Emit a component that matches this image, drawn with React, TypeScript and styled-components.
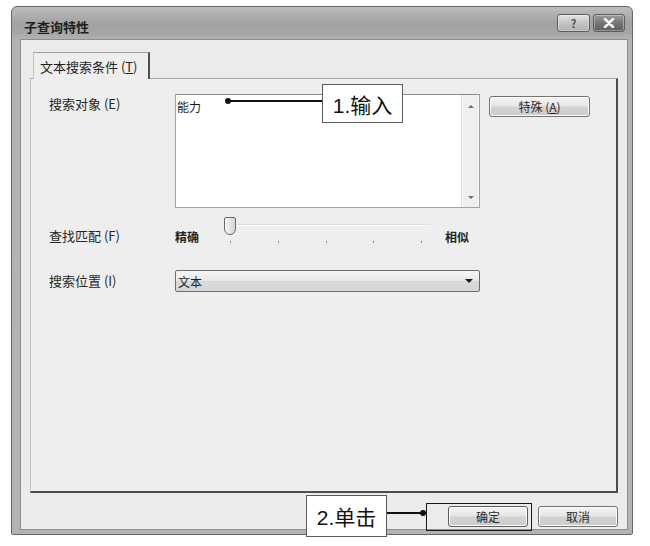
import styled, { createGlobalStyle } from "styled-components";

const GlobalStyle = createGlobalStyle`
  html, body {
    margin: 0;
    padding: 0;
    background: #ffffff;
  }
  body {
    font-family: "Noto Sans CJK SC", "Liberation Sans", sans-serif;
    color: #222;
  }
  * { box-sizing: border-box; }
`;

const Page = styled.div`
  position: relative;
  width: 650px;
  height: 546px;
  padding: 6px 0 0 11px;
  overflow: hidden;
`;

const Window = styled.div`
  width: 622px;
  height: 529px;
  display: flex;
  flex-direction: column;
  border: 1px solid #666666;
  border-radius: 6px 6px 2px 2px;
  background: linear-gradient(180deg, #bdbdbd 0px, #a2a2a2 16px, #a6a6a6 26px, #b4b4b4 34px, #b3b3b3 100%);
`;

const TitleBar = styled.div`
  height: 32px;
  display: flex;
  align-items: flex-start;
  justify-content: space-between;
  padding: 0 7px 0 12px;
`;

const Title = styled.span`
  font-size: 13px;
  line-height: 16px;
  font-weight: 700;
  color: #1e1e1e;
  margin-top: 12px;
`;

const CaptionButtons = styled.div`
  display: flex;
  gap: 3px;
  margin-top: 7px;
`;

const CaptionButton = styled.div<{ $dark?: boolean }>`
  width: ${({ $dark }) => ($dark ? "32px" : "33px")};
  height: 18px;
  display: flex;
  align-items: center;
  justify-content: center;
  font-size: 11px;
  font-weight: 700;
  color: #505050;
  border: 1px solid #5c5c5c;
  border-radius: 3px;
  background: ${({ $dark }) =>
    $dark
      ? "linear-gradient(180deg, #9c9c9c 0%, #767676 50%, #5e5e5e 100%)"
      : "linear-gradient(180deg, #e2e2e2 0%, #c4c4c4 50%, #b0b0b0 100%)"};
  box-shadow: inset 0 0 0 1px rgba(255, 255, 255, 0.35);
`;

const Client = styled.div`
  flex: 1;
  margin: 0 4px 4px 8px;
  display: flex;
  flex-direction: column;
  background: #ebebeb;
  border: 1px solid #8e8e8e;
`;

const TabStrip = styled.div`
  display: flex;
  padding: 12px 0 0 12px;
`;

const Tab = styled.div`
  position: relative;
  z-index: 1;
  height: 27px;
  margin-bottom: -1px;
  padding: 0 10px 0 6px;
  display: flex;
  align-items: center;
  font-size: 13px;
  color: #1f1f1f;
  background: #eeeeee;
  border-top: 1px solid #a0a0a0;
  border-left: 1px solid #c4c4c4;
  border-right: 2px solid #4e4e4e;
`;

const Key = styled.span`
  text-decoration: underline;
`;

const Panel = styled.div`
  height: 415px;
  margin: 0 9px;
  padding: 15px 0 0 18px;
  background: #eeeeee;
  border-top: 1px solid #a6a6a6;
  border-left: 1px solid #c2c2c2;
  border-right: 2px solid #4e4e4e;
  border-bottom: 2px solid #4e4e4e;
`;

const Row = styled.div<{ $gap: number; $height?: number }>`
  display: flex;
  align-items: flex-start;
  margin-top: ${({ $gap }) => $gap}px;
  height: ${({ $height }) => ($height ? `${$height}px` : "auto")};
`;

const Label = styled.div<{ $top: number }>`
  width: 126px;
  flex-shrink: 0;
  padding-top: ${({ $top }) => $top}px;
  font-size: 13px;
  line-height: 16px;
  color: #262626;
`;

const TextBox = styled.div`
  width: 305px;
  height: 114px;
  display: flex;
  background: #ffffff;
  border: 1px solid #a4a4a4;
  border-top-color: #8a8a8a;
`;

const TextValue = styled.div`
  flex: 1;
  padding: 4px 0 0 1px;
  font-size: 12px;
  line-height: 15px;
  color: #1a1a1a;
`;

const ScrollBar = styled.div`
  width: 18px;
  display: flex;
  flex-direction: column;
  align-items: center;
  justify-content: space-between;
  padding: 10px 0 8px;
  background: #efefef;
  border-left: 1px solid #e0e0e0;
  box-shadow: inset 1px 0 0 #fafafa, inset -1px 0 0 #f8f8f8;
`;

const Arrow = styled.div<{ $down?: boolean }>`
  width: 0;
  height: 0;
  border-left: 3px solid transparent;
  border-right: 3px solid transparent;
  ${({ $down }) =>
    $down ? "border-top: 3px solid #6e6e6e;" : "border-bottom: 3px solid #6e6e6e;"}
`;

const PushButton = styled.div<{ $width: number; $strong?: boolean }>`
  width: ${({ $width }) => $width}px;
  height: 21px;
  display: flex;
  align-items: center;
  justify-content: center;
  font-size: 12px;
  color: #2a2a2a;
  border: 1px solid ${({ $strong }) => ($strong ? "#5c5c5c" : "#737373")};
  border-radius: 3px;
  background: linear-gradient(180deg, #f4f4f4 0%, #e6e6e6 48%, #d2d2d2 52%, #cdcdcd 100%);
  box-shadow: inset 0 0 0 1px #fbfbfb;
`;

const SideButton = styled(PushButton)`
  margin: 2px 0 0 9px;
`;

const SliderGroup = styled.div`
  display: flex;
  align-items: flex-start;
  height: 28px;
`;

const SliderEnd = styled.span<{ $gap: number }>`
  padding-top: 12px;
  margin-left: ${({ $gap }) => $gap}px;
  font-size: 12px;
  line-height: 15px;
  font-weight: 700;
  color: #252525;
`;

const Track = styled.div`
  position: relative;
  width: 212px;
  height: 28px;
  margin-left: 25px;
`;

const TrackLine = styled.div`
  position: absolute;
  left: 11px;
  right: 6px;
  top: 7px;
  height: 2px;
  background: #dcdcdc;
  border-bottom: 1px solid #fafafa;
`;

const Thumb = styled.div`
  position: absolute;
  left: 0;
  top: 0;
  width: 12px;
  height: 18px;
  border: 1px solid #6c6c6c;
  border-radius: 2px 2px 6px 6px;
  background: linear-gradient(90deg, #f6f6f6, #d4d4d4);
`;

const Ticks = styled.div`
  position: absolute;
  left: 6px;
  width: 192px;
  top: 24px;
  display: flex;
  justify-content: space-between;
`;

const Tick = styled.span`
  width: 1px;
  height: 2px;
  background: #8a8a8a;
`;

const Select = styled.div`
  width: 305px;
  height: 22px;
  display: flex;
  align-items: center;
  justify-content: space-between;
  padding: 0 6px 0 2px;
  font-size: 12px;
  color: #1e1e1e;
  border: 1px solid #6e6e6e;
  border-radius: 2px;
  background: linear-gradient(180deg, #f6f6f6 0%, #e8e8e8 48%, #d9d9d9 52%, #d6d6d6 100%);
`;

const DropArrow = styled.div`
  width: 0;
  height: 0;
  border-left: 4px solid transparent;
  border-right: 4px solid transparent;
  border-top: 4px solid #1a1a1a;
`;

const Footer = styled.div`
  display: flex;
  justify-content: flex-end;
  gap: 10px;
  padding: 13px 9px 0 0;
`;

const Callout = styled.div<{ $x: number; $y: number; $w: number; $h: number }>`
  position: absolute;
  left: ${({ $x }) => $x}px;
  top: ${({ $y }) => $y}px;
  width: ${({ $w }) => $w}px;
  height: ${({ $h }) => $h}px;
  display: flex;
  align-items: center;
  justify-content: center;
  font-family: "Liberation Sans", "Noto Sans CJK SC", sans-serif;
  font-size: 21px;
  color: #111;
  background: #ffffff;
  border: 1px solid #5a5a5a;
`;

const Leader = styled.div<{ $x: number; $y: number; $w: number }>`
  position: absolute;
  left: ${({ $x }) => $x}px;
  top: ${({ $y }) => $y}px;
  width: ${({ $w }) => $w}px;
  height: 2px;
  background: #111;
`;

const Dot = styled.div<{ $x: number; $y: number }>`
  position: absolute;
  left: ${({ $x }) => $x}px;
  top: ${({ $y }) => $y}px;
  width: 6px;
  height: 6px;
  border-radius: 50%;
  background: #111;
`;

const Frame = styled.div`
  position: absolute;
  left: 426px;
  top: 503px;
  width: 106px;
  height: 28px;
  border: 1.5px solid #1a1a1a;
`;

const CloseIcon = () => (
  <svg width="12" height="10" viewBox="0 0 12 10">
    <path d="M2 1 L10 9 M10 1 L2 9" stroke="#f4f4f4" strokeWidth="2.6" strokeLinecap="round" />
  </svg>
);

export default function App() {
  return (
    <>
      <GlobalStyle />
      <Page>
        <Window>
          <TitleBar>
            <Title>子查询特性</Title>
            <CaptionButtons>
              <CaptionButton>?</CaptionButton>
              <CaptionButton $dark>
                <CloseIcon />
              </CaptionButton>
            </CaptionButtons>
          </TitleBar>
          <Client>
            <TabStrip>
              <Tab>
                文本搜索条件 (<Key>T</Key>)
              </Tab>
            </TabStrip>
            <Panel>
              <Row $gap={0}>
                <Label $top={2}>搜索对象 (E)</Label>
                <TextBox>
                  <TextValue>能力</TextValue>
                  <ScrollBar>
                    <Arrow />
                    <Arrow $down />
                  </ScrollBar>
                </TextBox>
                <SideButton $width={101}>
                  特殊 (<Key>A</Key>)
                </SideButton>
              </Row>
              <Row $gap={9} $height={28}>
                <Label $top={11}>查找匹配 (F)</Label>
                <SliderGroup>
                  <SliderEnd $gap={0}>精确</SliderEnd>
                  <Track>
                    <TrackLine />
                    <Thumb />
                    <Ticks>
                      <Tick />
                      <Tick />
                      <Tick />
                      <Tick />
                      <Tick />
                    </Ticks>
                  </Track>
                  <SliderEnd $gap={9}>相似</SliderEnd>
                </SliderGroup>
              </Row>
              <Row $gap={25}>
                <Label $top={3}>搜索位置 (I)</Label>
                <Select>
                  <span>文本</span>
                  <DropArrow />
                </Select>
              </Row>
            </Panel>
            <Footer>
              <PushButton $width={80} $strong>确定</PushButton>
              <PushButton $width={80}>取消</PushButton>
            </Footer>
          </Client>
        </Window>

        <Leader $x={228} $y={100} $w={94} />
        <Dot $x={225} $y={98} />
        <Callout $x={322} $y={84} $w={81} $h={39}>1.输入</Callout>

        <Callout $x={306} $y={495} $w={81} $h={42}>2.单击</Callout>
        <Leader $x={387} $y={512} $w={36} />
        <Dot $x={420} $y={510} />
        <Frame />
      </Page>
    </>
  );
}
